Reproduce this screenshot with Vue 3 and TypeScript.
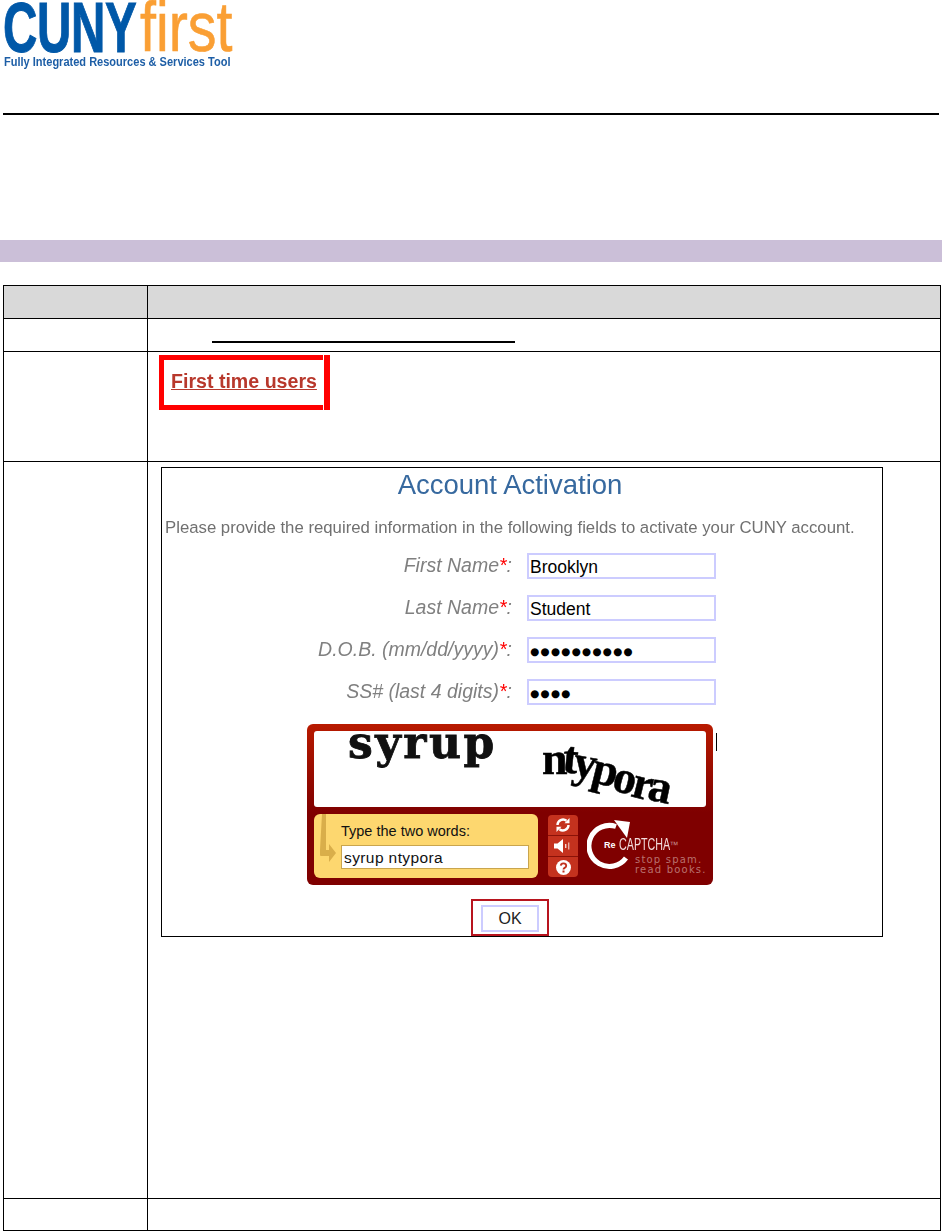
<script setup lang="ts">
interface Field { label: string; value: string; secret: boolean }
const fields: Field[] = [
  { label: 'First Name', value: 'Brooklyn', secret: false },
  { label: 'Last Name', value: 'Student', secret: false },
  { label: 'D.O.B. (mm/dd/yyyy)', value: '●●●●●●●●●●', secret: true },
  { label: 'SS# (last 4 digits)', value: '●●●●', secret: true },
]
const drift = [0, -1, 4, 11, 19, 25, 28]
const tilt = [0, 6, 10, 14, 14, 14, 12]
const word = 'ntypora'.split('').map((ch, i) => ({ ch, y: drift[i], r: tilt[i] }))
</script>

<template>
  <main class="page">
    <header class="logo-area">
      <div class="logo-main"><span class="cuny">CUNY</span><span class="first">first</span></div>
      <div class="logo-sub">Fully Integrated Resources &amp; Services Tool</div>
    </header>
    <div class="rule"></div>
    <div class="band"></div>

    <section class="table">
      <div class="cell head side"></div>
      <div class="cell head"></div>
      <div class="cell side"></div>
      <div class="cell link-row"><div class="link-line"></div></div>
      <div class="cell side"></div>
      <div class="cell first-row">
        <div class="callout"><a class="first-link">First time users</a><i class="callout-end"></i></div>
      </div>
      <div class="cell side"></div>
      <div class="cell shot-row">
        <div class="shot">
          <h1 class="title">Account Activation</h1>
          <p class="intro">Please provide the required information in the following fields to activate your CUNY account.</p>
          <div class="form">
            <div v-for="f in fields" :key="f.label" class="form-row">
              <span class="label">{{ f.label }}<b class="star">*</b>:</span>
              <span class="field" :class="{ secret: f.secret }">{{ f.value }}</span>
            </div>
          </div>

          <div class="captcha">
            <div class="challenge">
              <span class="word-a">syrup</span>
              <span class="word-b"><span v-for="(l, i) in word" :key="i" class="wl" :style="{ transform: `translateY(${l.y}px) rotate(${l.r}deg)` }">{{ l.ch }}</span></span>
            </div>
            <div class="controls">
              <div class="answer">
                <svg class="answer-arrow" width="18" height="56" viewBox="0 0 18 56">
                  <path d="M4 0h4v36h3v-6l7 9-7 9v-6H3a1 1 0 0 1-1-1V36z" fill="#d9ae4a" />
                </svg>
                <div class="answer-label">Type the two words:</div>
                <div class="answer-input">syrup ntypora</div>
              </div>
              <div class="btns">
                <div class="btn">
                  <svg width="16" height="16" viewBox="0 0 16 16" fill="none" stroke="#fff" stroke-width="2.4">
                    <path d="M2.500 8a5.500 5.500 0 0 1 9-4.200" /><path d="M13.500 8a5.500 5.500 0 0 1-9 4.200" />
                    <path d="M14.500 1v5.200H9.500z" fill="#fff" stroke="none" /><path d="M1.500 15V9.800h5z" fill="#fff" stroke="none" />
                  </svg>
                </div>
                <div class="btn">
                  <svg width="18" height="14" viewBox="0 0 18 14" fill="#fff">
                    <path d="M0 4.500h3.500L9 0v14L3.500 9.500H0z" />
                    <rect x="11" y="5" width="1.400" height="4" opacity=".8" /><rect x="14" y="3.500" width="1.400" height="7" opacity=".6" />
                  </svg>
                </div>
                <div class="btn">
                  <svg width="15" height="15" viewBox="0 0 15 15">
                    <circle cx="7.500" cy="7.500" r="7.500" fill="#fff" />
                    <path d="M4.800 5.600a2.700 2.300 0 1 1 4.200 2c-1 .6-1.500 1-1.500 2" fill="none" stroke="#c0301e" stroke-width="1.900" />
                    <rect x="6.500" y="10.500" width="2" height="2" fill="#c0301e" />
                  </svg>
                </div>
              </div>
              <div class="brand">
                <svg class="brand-ring" width="46" height="50" viewBox="0 0 46 50" fill="none">
                  <path d="M39 38A20.500 20.500 0 1 1 29 6.500" stroke="#fff" stroke-width="5" />
                  <path d="M27 0l16 2-3 16z" fill="#fff" />
                </svg>
                <div class="brand-name"><span class="re">Re</span><span class="cap">CAPTCHA</span><span class="tm">™</span></div>
                <div class="tag">stop spam.<br />read books.</div>
              </div>
            </div>
            <i class="caret"></i>
          </div>

          <div class="ok-wrap"><div class="ok-mark"><div class="ok">OK</div></div></div>
        </div>
      </div>
      <div class="cell side last"></div>
      <div class="cell last"></div>
    </section>
  </main>
</template>

<style>
html, body { margin: 0; background: #fff; }
</style>

<style scoped>
.page { width: 942px; height: 1231px; overflow: hidden; font-family: "Liberation Sans", Arial, sans-serif; background: #fff; }

.logo-area { height: 113px; padding-left: 3px; box-sizing: border-box; overflow: hidden; filter: blur(.4px); }
.logo-main { display: flex; height: 55px; align-items: flex-start; white-space: nowrap; }
.cuny { display: inline-block; width: 137px; font-size: 71px; font-weight: 700; line-height: 55px; color: #0058a8; letter-spacing: -.5px; -webkit-text-stroke: 1px #0058a8; transform: scaleX(.67); transform-origin: left top; }
.first { display: inline-block; font-size: 70px; line-height: 55px; color: #fa9f34; -webkit-text-stroke: .6px #fa9f34; transform: scaleX(.82); transform-origin: left top; }
.logo-sub { margin-left: 1px; font-size: 13px; line-height: 13px; font-weight: 700; color: #1d5ea6; white-space: nowrap; transform: scaleX(.848); transform-origin: left top; }

.rule { height: 2px; margin: 0 3px 0 3px; background: #000; }
.band { height: 22px; margin-top: 125px; background: #cbbfd8; }

.table { display: grid; grid-template-columns: 144px 793px; grid-template-rows: 33px 33px 110px 737px 32px; margin: 23px 0 0 3px; border-top: 1px solid #000; border-left: 1px solid #000; width: 938px; box-sizing: border-box; }
.cell { border-right: 1px solid #000; border-bottom: 1px solid #000; box-sizing: border-box; min-width: 0; }
.head { background: #d9d9d9; }
.link-row { padding: 22px 0 0 64px; }
.link-line { width: 303px; height: 2px; background: #000; }

.first-row { padding: 3px 0 0 11px; }
.callout { position: relative; box-sizing: border-box; width: 164px; height: 55px; border: 5px solid #f00; border-right: 0; padding: 9px 0 0 7px; }
.callout-end { position: absolute; left: 160px; top: -5px; width: 6px; height: 55px; background: #f00; }
.first-link { font-size: 19.600px; line-height: 24px; font-weight: 700; color: #b8382c; text-decoration: underline; white-space: nowrap; filter: blur(.3px); }

.shot-row { padding: 5px 0 0 13px; }
.shot { box-sizing: border-box; width: 722px; height: 470px; border: 1px solid #000; }
.title { margin: 0; padding-right: 24px; text-align: center; font-weight: 400; font-size: 27.500px; line-height: 34px; color: #37699f; filter: blur(.3px); }
.intro { margin: 14px 0 0 3px; font-size: 16.750px; line-height: 24px; color: #707070; white-space: nowrap; filter: blur(.3px); }
.form { margin-top: 13px; display: flex; flex-direction: column; gap: 16px; }
.form-row { display: flex; align-items: flex-start; height: 26px; }
.label { width: 350px; text-align: right; font-style: italic; font-size: 19.500px; line-height: 24px; color: #808080; white-space: nowrap; filter: blur(.3px); }
.star { color: #f00; font-weight: 400; }
.field { box-sizing: border-box; margin-left: 15px; width: 189px; height: 26px; border: 2px solid #ccccff; padding-left: 1px; font-size: 17.500px; line-height: 24px; color: #000; }
.field.secret { font-family: "DejaVu Sans", sans-serif; font-size: 10.500px; letter-spacing: 1.200px; }

.captcha { position: relative; box-sizing: border-box; width: 406px; height: 161px; margin: 19px 0 0 145px; padding: 7px; border-radius: 6px; background: linear-gradient(#b81a00 0, #7f0000 55%, #7f0000 100%); }
.challenge { position: relative; height: 76px; border-radius: 3px; background: #fff; overflow: hidden; }
.word-a { position: absolute; left: 34px; top: -16px; font-family: "DejaVu Serif", serif; font-weight: 700; font-size: 44px; line-height: 56px; letter-spacing: 2.500px; color: #111; -webkit-text-stroke: .8px #111; filter: blur(.6px); }
.word-b { position: absolute; left: 228px; top: 4px; font-family: "Liberation Serif", serif; font-weight: 700; font-size: 46px; line-height: 48px; color: #000; -webkit-text-stroke: .5px #000; filter: blur(.5px); white-space: nowrap; }
.wl { display: inline-block; margin-right: -4.300px; }
.controls { display: flex; margin-top: 7px; height: 64px; }
.answer { position: relative; box-sizing: border-box; width: 224px; height: 64px; border-radius: 6px; background: #fdd76f; padding: 9px 0 0 27px; }
.answer-arrow { position: absolute; left: 4px; top: 0; }
.answer-label { font-size: 14.500px; line-height: 17px; color: #111; white-space: nowrap; }
.answer-input { box-sizing: border-box; width: 188px; height: 24px; margin-top: 5px; border: 1.500px solid #c9a54e; background: #fff; font-size: 15.500px; line-height: 24px; padding-left: 2px; color: #111; letter-spacing: .4px; }
.btns { display: flex; flex-direction: column; width: 30px; height: 62px; margin: 1px 0 0 10px; border-radius: 4px; overflow: hidden; background: #c4321e; }
.btn { flex: 1; display: flex; align-items: center; justify-content: center; border-bottom: 1px solid #8a1208; }
.btn:last-child { border-bottom: 0; }
.brand { position: relative; flex: 1; }
.brand-ring { position: absolute; left: 9px; top: 6px; }
.brand-name { position: absolute; left: 26px; top: 22px; display: flex; align-items: center; white-space: nowrap; color: #fff; }
.re { font-size: 9px; font-weight: 700; margin-right: 3px; }
.cap { display: inline-block; width: 48px; font-size: 17px; line-height: 18px; transform: scaleX(.63); transform-origin: left center; color: #f3dcdc; }
.tm { font-size: 9px; color: #c48e8e; margin-left: 3px; }
.tag { position: absolute; left: 57px; top: 41px; font-family: "DejaVu Sans", sans-serif; font-size: 10px; line-height: 10px; letter-spacing: 1.200px; color: #b9716f; white-space: nowrap; }
.caret { position: absolute; left: 409px; top: 9px; width: 1px; height: 18px; background: #000; }

.ok-wrap { display: flex; margin: 14px 0 0 309px; }
.ok-mark { box-sizing: border-box; width: 78px; height: 37px; border: 2px solid #b8141e; padding: 4px 0 0 8px; }
.ok { box-sizing: border-box; width: 58px; height: 27px; border: 2px solid #ccccff; text-align: center; font-size: 16px; line-height: 23px; color: #222; }
</style>
